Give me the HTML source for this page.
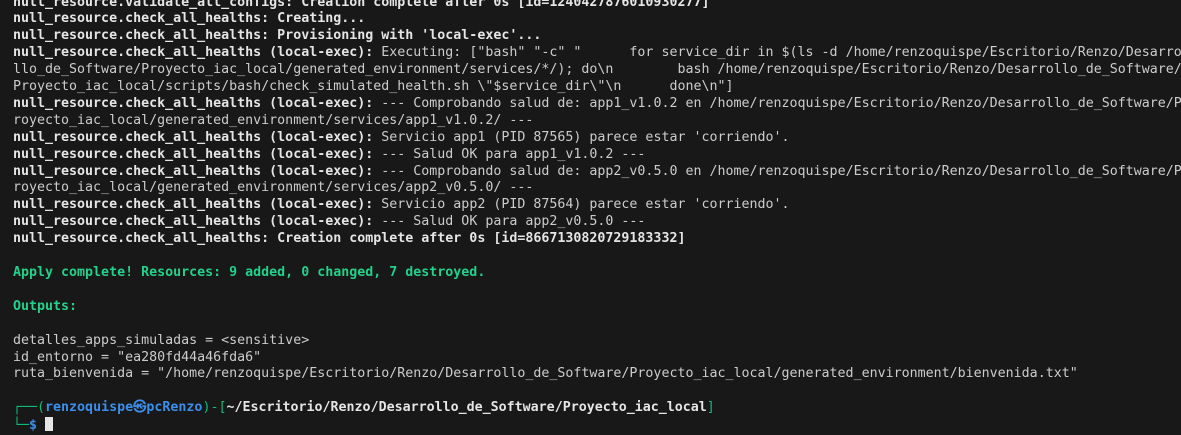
<!DOCTYPE html>
<html><head><meta charset="utf-8"><style>
html,body{margin:0;padding:0;background:#181818;width:1181px;height:422px;overflow:hidden}
pre{margin:0;position:absolute;left:13px;top:-5.5px;font-family:"DejaVu Sans Mono","Liberation Mono",monospace;font-size:13.3px;line-height:16.9px;color:#cccccc;white-space:pre}
b{color:#e5e5e5;font-weight:bold}
.g{color:#23d18b;font-weight:bold}
.bl{color:#3b8eea;font-weight:bold}
.gr{color:#0dbc79}
.cur{display:inline-block;width:8px;height:14px;background:#e5e5e5;vertical-align:-2px}
</style></head><body><pre><b>null_resource.validate_all_configs: Creation complete after 0s [id=1240427876010930277]</b>
<b>null_resource.check_all_healths: Creating...</b>
<b>null_resource.check_all_healths: Provisioning with 'local-exec'...</b>
<b>null_resource.check_all_healths (local-exec):</b> Executing: ["bash" "-c" "      for service_dir in $(ls -d /home/renzoquispe/Escritorio/Renzo/Desarro
llo_de_Software/Proyecto_iac_local/generated_environment/services/*/); do\n        bash /home/renzoquispe/Escritorio/Renzo/Desarrollo_de_Software/
Proyecto_iac_local/scripts/bash/check_simulated_health.sh \"$service_dir\"\n      done\n"]
<b>null_resource.check_all_healths (local-exec):</b> --- Comprobando salud de: app1_v1.0.2 en /home/renzoquispe/Escritorio/Renzo/Desarrollo_de_Software/P
royecto_iac_local/generated_environment/services/app1_v1.0.2/ ---
<b>null_resource.check_all_healths (local-exec):</b> Servicio app1 (PID 87565) parece estar 'corriendo'.
<b>null_resource.check_all_healths (local-exec):</b> --- Salud OK para app1_v1.0.2 ---
<b>null_resource.check_all_healths (local-exec):</b> --- Comprobando salud de: app2_v0.5.0 en /home/renzoquispe/Escritorio/Renzo/Desarrollo_de_Software/P
royecto_iac_local/generated_environment/services/app2_v0.5.0/ ---
<b>null_resource.check_all_healths (local-exec):</b> Servicio app2 (PID 87564) parece estar 'corriendo'.
<b>null_resource.check_all_healths (local-exec):</b> --- Salud OK para app2_v0.5.0 ---
<b>null_resource.check_all_healths: Creation complete after 0s [id=8667130820729183332]</b>

<span class="g">Apply complete! Resources: 9 added, 0 changed, 7 destroyed.</span>

<span class="g">Outputs:</span>

detalles_apps_simuladas = &lt;sensitive&gt;
id_entorno = "ea280fd44a46fda6"
ruta_bienvenida = "/home/renzoquispe/Escritorio/Renzo/Desarrollo_de_Software/Proyecto_iac_local/generated_environment/bienvenida.txt"

<span class="gr">┌──(</span><span class="bl">renzoquispe㉿pcRenzo</span><span class="gr">)-[</span><b>~/Escritorio/Renzo/Desarrollo_de_Software/Proyecto_iac_local</b><span class="gr">]</span>
<span class="gr">└─</span><span class="bl">$</span> <span class="cur"></span></pre></body></html>
